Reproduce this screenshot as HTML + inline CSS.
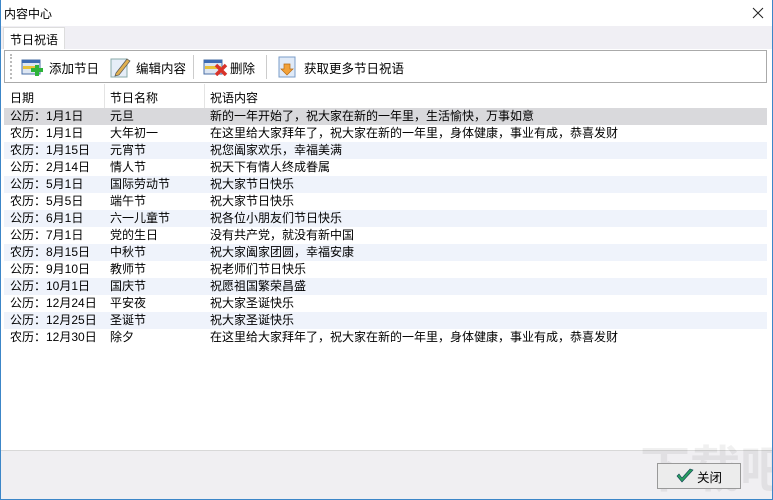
<!DOCTYPE html>
<html><head><meta charset="utf-8"><style>
*{margin:0;padding:0;box-sizing:border-box}
body{width:773px;height:500px;overflow:hidden;background:#fff;font-family:"Liberation Sans","Noto Sans CJK SC",sans-serif;font-size:12px;color:#000;position:relative}
.win{position:absolute;left:0;top:0;width:773px;height:500px;border:1px solid #3c86c8;border-top:none;z-index:5;pointer-events:none}
.title{position:absolute;left:4px;top:5px;font-size:12px}
.x{position:absolute;right:9px;top:7px}
.tabs{position:absolute;left:1px;top:26px;width:771px;height:23px;background:#f0eff4}
.tab{position:absolute;left:2px;top:1px;width:62px;height:22px;background:#fff;border:1px solid #ddd;border-bottom:none;padding:3px 0 0 6px}
.tb{position:absolute;left:4px;top:50px;width:763px;height:33px;border:1px solid #aaa;background:#fff}
.tb .grip{position:absolute;left:5px;top:3px;width:2px;height:25px;border-left:2px dotted #bbb}
.btn{position:absolute;top:6px;height:20px;display:flex;align-items:center;font-size:12.5px}
.sep{position:absolute;top:4px;width:1px;height:24px;background:#ccc}
.hdr{position:absolute;left:4px;top:84px;width:763px;height:24px;background:#fff}
.hdr div{position:absolute;top:5px}
.hdr .c{position:absolute;top:0;width:1px;height:24px;background:#e4e4e4}
.row{position:absolute;left:4px;width:763px;height:17px;line-height:17px}
.row span{position:absolute;top:0;white-space:nowrap}
.bot{position:absolute;left:1px;top:450px;width:771px;height:50px;background:#f0eff2;border-top:1px solid #d8d8d8}
.close{position:absolute;left:657px;top:463px;width:84px;height:26px;border:1px solid #999;background:#ececec;display:flex;align-items:center;justify-content:center;font-size:12.5px}
.wm{position:absolute;left:640px;top:440px;font-size:50px;line-height:60px;color:rgba(0,0,0,0.06);font-weight:bold;white-space:nowrap}
</style></head><body>
<div class="win"></div>
<div class="title">内容中心</div>
<svg class="x" width="12" height="12" viewBox="0 0 12 12"><path d="M1 1 L11 11 M11 1 L1 11" stroke="#222" stroke-width="1"/></svg>
<div class="tabs"><div class="tab">节日祝语</div></div>
<div class="tb">
<div class="grip"></div>
<div class="btn" style="left:16px">
<svg width="24" height="18" viewBox="0 0 24 18"><rect x="1" y="2" width="18" height="14" fill="#dde6f2" stroke="#4a6fa5"/><rect x="1" y="2" width="18" height="3" fill="#3d6bb3"/><rect x="2" y="8" width="16" height="3" fill="#e8c23a"/><rect x="14" y="7" width="4" height="11" fill="#2db33a"/><rect x="10" y="10" width="12" height="4" fill="#2db33a"/></svg>
<span style="margin-left:4px">添加节日</span></div>
<div class="btn" style="left:104px">
<svg width="22" height="22" viewBox="0 0 22 22"><rect x="2" y="3" width="16" height="18" fill="#e6edf7" stroke="#8aa"/><path d="M7 17 L18 3 L21 5 L10 19 L6 20Z" fill="#e0b050" stroke="#555" stroke-width=".7"/></svg>
<span style="margin-left:5px">编辑内容</span></div>
<div class="sep" style="left:188px"></div>
<div class="btn" style="left:198px">
<svg width="26" height="18" viewBox="0 0 26 18"><rect x="1" y="2" width="18" height="14" fill="#dde6f2" stroke="#4a6fa5"/><rect x="1" y="2" width="18" height="3" fill="#3d6bb3"/><rect x="2" y="8" width="16" height="3" fill="#e8c23a"/><path d="M13 7 L23 17 M23 7 L13 17" stroke="#d8332a" stroke-width="3.5"/></svg>
<span style="margin-left:1px">删除</span></div>
<div class="sep" style="left:261px"></div>
<div class="btn" style="left:272px">
<svg width="20" height="22" viewBox="0 0 20 22"><rect x="2" y="1" width="16" height="20" fill="#e0eaf7" stroke="#7a9cc8"/><path d="M7 8 H13 V13 H16 L10 19 L4 13 H7Z" fill="#f2a23a" stroke="#b86a10" stroke-width=".7"/></svg>
<span style="margin-left:7px">获取更多节日祝语</span></div>
</div>
<div class="hdr"><div style="left:6px">日期</div><span class="c" style="left:100px"></span><div style="left:106px">节日名称</div><span class="c" style="left:200px"></span><div style="left:206px">祝语内容</div></div>
<div class="row" style="top:108px;background:#d9d9dc"><span style="left:6px">公历：1月1日</span><span style="left:106px">元旦</span><span style="left:206px">新的一年开始了，祝大家在新的一年里，生活愉快，万事如意</span></div>
<div class="row" style="top:125px"><span style="left:6px">农历：1月1日</span><span style="left:106px">大年初一</span><span style="left:206px">在这里给大家拜年了，祝大家在新的一年里，身体健康，事业有成，恭喜发财</span></div>
<div class="row" style="top:142px;background:#eff3fb"><span style="left:6px">农历：1月15日</span><span style="left:106px">元宵节</span><span style="left:206px">祝您阖家欢乐，幸福美满</span></div>
<div class="row" style="top:159px"><span style="left:6px">公历：2月14日</span><span style="left:106px">情人节</span><span style="left:206px">祝天下有情人终成眷属</span></div>
<div class="row" style="top:176px;background:#eff3fb"><span style="left:6px">公历：5月1日</span><span style="left:106px">国际劳动节</span><span style="left:206px">祝大家节日快乐</span></div>
<div class="row" style="top:193px"><span style="left:6px">农历：5月5日</span><span style="left:106px">端午节</span><span style="left:206px">祝大家节日快乐</span></div>
<div class="row" style="top:210px;background:#eff3fb"><span style="left:6px">公历：6月1日</span><span style="left:106px">六一儿童节</span><span style="left:206px">祝各位小朋友们节日快乐</span></div>
<div class="row" style="top:227px"><span style="left:6px">公历：7月1日</span><span style="left:106px">党的生日</span><span style="left:206px">没有共产党，就没有新中国</span></div>
<div class="row" style="top:244px;background:#eff3fb"><span style="left:6px">农历：8月15日</span><span style="left:106px">中秋节</span><span style="left:206px">祝大家阖家团圆，幸福安康</span></div>
<div class="row" style="top:261px"><span style="left:6px">公历：9月10日</span><span style="left:106px">教师节</span><span style="left:206px">祝老师们节日快乐</span></div>
<div class="row" style="top:278px;background:#eff3fb"><span style="left:6px">公历：10月1日</span><span style="left:106px">国庆节</span><span style="left:206px">祝愿祖国繁荣昌盛</span></div>
<div class="row" style="top:295px"><span style="left:6px">公历：12月24日</span><span style="left:106px">平安夜</span><span style="left:206px">祝大家圣诞快乐</span></div>
<div class="row" style="top:312px;background:#eff3fb"><span style="left:6px">公历：12月25日</span><span style="left:106px">圣诞节</span><span style="left:206px">祝大家圣诞快乐</span></div>
<div class="row" style="top:329px"><span style="left:6px">农历：12月30日</span><span style="left:106px">除夕</span><span style="left:206px">在这里给大家拜年了，祝大家在新的一年里，身体健康，事业有成，恭喜发财</span></div>
<div class="bot"></div>
<div class="wm">下载吧</div>
<div class="close"><svg width="18" height="16" viewBox="0 0 18 16"><path d="M1 8 L6 14 L17 2 L14 1 L6 10 L3 6Z" fill="#2aa060" stroke="#145" stroke-width=".6"/></svg><span style="margin-left:3px">关闭</span></div>
</body></html>
